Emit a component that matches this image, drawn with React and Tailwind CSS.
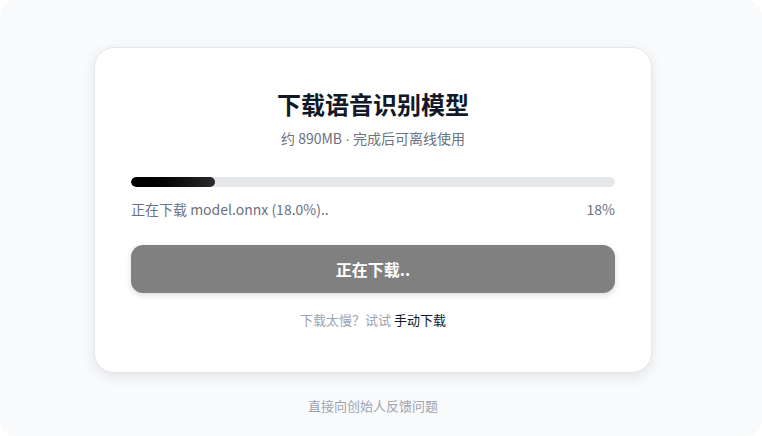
// modal de descarcare model vocal (ecran static)
const FONT = "font-['Noto_Sans_CJK_SC','Noto_Sans',sans-serif]"

function ProgressBar({ percent }) {
  return (
    <div className="h-2.5 w-full rounded-full bg-[#e5e7eb] overflow-hidden">
      <div
        className="h-full rounded-full bg-gradient-to-r from-[#000000] to-[#2b2b2b]"
        style={{ width: `${percent}%` }}
      />
    </div>
  )
}

export default function App() {
  const percent = 17.4

  return (
    <div className={`w-[762px] h-[436px] bg-[#f9fafb] rounded-2xl flex flex-col items-center pt-[47px] pr-4 ${FONT}`}>
      {/* card principal */}
      <div className="w-[558px] bg-white rounded-[20px] border border-[#e5e7eb] shadow-[0_4px_14px_rgba(0,0,0,0.09)] px-9 pt-[40px] pb-[42px]">
        <h1 className="text-center text-[24px] leading-8 font-bold text-[#111827]">
          下载语音识别模型
        </h1>
        <p className="mt-2 h-5 text-center text-sm leading-5 text-[#6b7280]">
          约 890MB <span className="leading-none font-['Liberation_Sans',sans-serif]">·</span> 完成后可离线使用
        </p>

        <div className="mt-[29px]">
          <ProgressBar percent={percent} />
        </div>
        <div className="mt-3 flex justify-between text-sm leading-5 text-[#6b7280]">
          <span>正在下载 model.onnx (18.0%)..</span>
          <span>18%</span>
        </div>

        <button className="mt-[26px] w-full h-12 rounded-xl bg-[#808080] text-white text-base font-bold shadow-[0_2px_6px_rgba(0,0,0,0.15)]">
          正在下载..
        </button>

        <p className="mt-[17px] text-center text-[13px] leading-5 text-[#9ca3af]">
          下载太慢？试试 <span className="text-[#111827]">手动下载</span>
        </p>
      </div>

      {/* footer */}
      <p className="mt-[23px] text-[13px] leading-5 text-[#9ca3af]">直接向创始人反馈问题</p>
    </div>
  )
}
